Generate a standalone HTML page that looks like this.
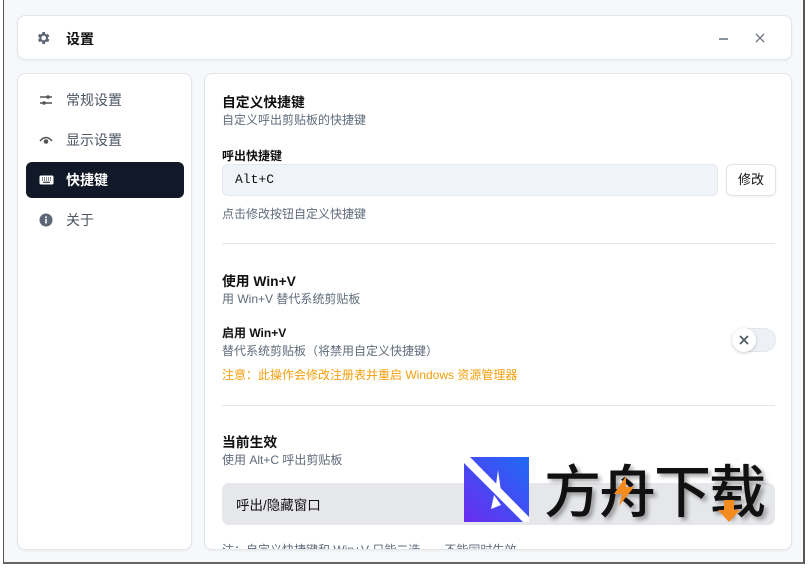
<!DOCTYPE html>
<html><head><meta charset="utf-8"><style>
*{box-sizing:border-box;margin:0;padding:0}
body{width:809px;height:568px;background:#fff;font-family:"Liberation Sans","Noto Sans CJK SC",sans-serif;position:relative;overflow:hidden;color:#111}
.win{position:absolute;left:3px;top:0;width:802px;height:564px;background:#f7f8fa;border-left:1px solid #555;border-right:2px solid #555;border-bottom:2px solid #666}
.card{position:absolute;background:#fff;border:1px solid #e1e5ec;border-radius:8px;box-shadow:0 1px 2px rgba(0,0,0,.05)}
.abs{position:absolute;white-space:nowrap}
.t{font-size:13.8px;font-weight:bold;color:#111}
.s{font-size:12px;color:#5f6b7a}
.nav{position:absolute;left:8px;width:158px;height:36px;border-radius:6px;font-size:14px;color:#4b5563;display:flex;align-items:center;padding-left:40px}
.nav svg{position:absolute;left:13px;top:11px}
.hr{position:absolute;left:17px;width:553px;height:1px;background:#e3e6eb}
</style></head><body>
<div class="win">
<div class="card" style="left:13px;top:15px;width:775px;height:45px">
 <svg class="abs" style="left:17px;top:14px" width="16" height="16" viewBox="0 0 24 24"><path fill="#5d6675" d="M19.4 13a7.5 7.5 0 0 0 0-2l2.1-1.6-2-3.5-2.5 1a7.4 7.4 0 0 0-1.7-1L15 3h-4l-.4 2.8a7.4 7.4 0 0 0-1.7 1l-2.5-1-2 3.5L6.6 11a7.5 7.5 0 0 0 0 2l-2.1 1.6 2 3.5 2.5-1a7.4 7.4 0 0 0 1.7 1L11 21h4l.4-2.8a7.4 7.4 0 0 0 1.7-1l2.5 1 2-3.5zM13 15.5a3.5 3.5 0 1 1 0-7 3.5 3.5 0 0 1 0 7z"/></svg>
 <div class="abs" style="left:48px;top:13px;font-size:14px;font-weight:bold">设置</div>
 <div class="abs" style="left:701px;top:22px;width:9px;height:1.5px;background:#8a93a0"></div>
 <svg class="abs" style="left:737px;top:17px" width="10" height="10" viewBox="0 0 10 10"><path d="M1 1L9 9M9 1L1 9" stroke="#6b7480" stroke-width="1.3"/></svg>
</div>
<div class="card" style="left:13px;top:73px;width:175px;height:477px">
 <div class="nav" style="top:8px"><svg width="14" height="14" viewBox="0 0 14 14"><path d="M1 4h12M1 10h12" stroke="#555" stroke-width="1.5"/><circle cx="9" cy="4" r="1.8" fill="#555"/><circle cx="5" cy="10" r="1.8" fill="#555"/></svg>常规设置</div>
 <div class="nav" style="top:48px"><svg width="14" height="14" viewBox="0 0 14 14"><path d="M1 8Q7 1 13 8" stroke="#555" stroke-width="1.4" fill="none"/><circle cx="7" cy="8.5" r="2.3" fill="#555"/></svg>显示设置</div>
 <div class="nav" style="top:88px;background:#111827;color:#fff;font-weight:bold"><svg width="15" height="14" viewBox="0 0 15 14"><rect x="0.5" y="2.5" width="14" height="9" rx="1.5" fill="#fff"/><path d="M3 5h1M5 5h1M7 5h1M9 5h1M11 5h1M3 7h1M5 7h1M7 7h1M9 7h1M11 7h1M4 9.3h7" stroke="#111827" stroke-width="1"/></svg>快捷键</div>
 <div class="nav" style="top:128px"><svg width="14" height="14" viewBox="0 0 14 14"><circle cx="7" cy="7" r="6.5" fill="#5d6675"/><rect x="6.2" y="6" width="1.6" height="4.5" fill="#fff"/><circle cx="7" cy="4.2" r="1" fill="#fff"/></svg>关于</div>
</div>
<div class="card" style="left:200px;top:73px;width:588px;height:477px;overflow:hidden">
 <div class="abs t" style="left:17px;top:17px">自定义快捷键</div>
 <div class="abs s" style="left:17px;top:37px">自定义呼出剪贴板的快捷键</div>
 <div class="abs" style="left:17px;top:73px;font-size:12px;font-weight:bold">呼出快捷键</div>
 <div class="abs" style="left:17px;top:90px;width:496px;height:32px;background:#f0f3f7;border:1px solid #e3e7ee;border-radius:6px;font-family:'Liberation Mono',monospace;font-size:13px;padding:7px 12px">Alt+C</div>
 <div class="abs" style="left:521px;top:90px;width:50px;height:32px;background:#fff;border:1px solid #dfe3ea;border-radius:6px;font-size:13px;text-align:center;line-height:30px;box-shadow:0 1px 2px rgba(0,0,0,.06)">修改</div>
 <div class="abs s" style="left:17px;top:131px">点击修改按钮自定义快捷键</div>
 <div class="hr" style="top:169px"></div>
 <div class="abs t" style="left:17px;top:196px">使用 Win+V</div>
 <div class="abs s" style="left:17px;top:216px">用 Win+V 替代系统剪贴板</div>
 <div class="abs" style="left:17px;top:250px;font-size:12px;font-weight:bold">启用 Win+V</div>
 <div class="abs s" style="left:17px;top:268px">替代系统剪贴板（将禁用自定义快捷键）</div>
 <div class="abs" style="left:17px;top:292px;font-size:12px;color:#f59e0b">注意：此操作会修改注册表并重启 Windows 资源管理器</div>
 <div class="abs" style="left:527px;top:254px;width:44px;height:24px;border-radius:12px;background:#eef1f6;border:1px solid #e2e6ed"></div>
 <div class="abs" style="left:527px;top:254px;width:24px;height:24px;border-radius:12px;background:#fff;box-shadow:0 1px 3px rgba(0,0,0,.2)"><svg style="position:absolute;left:7px;top:7px" width="10" height="10" viewBox="0 0 10 10"><path d="M1 1L9 9M9 1L1 9" stroke="#4b5563" stroke-width="1.6"/></svg></div>
 <div class="hr" style="top:331px"></div>
 <div class="abs t" style="left:17px;top:357px">当前生效</div>
 <div class="abs s" style="left:17px;top:377px">使用 Alt+C 呼出剪贴板</div>
 <div class="abs" style="left:17px;top:409px;width:553px;height:42px;background:#e6e7ea;border-radius:7px;font-size:13.5px;padding:11px 14px">呼出/隐藏窗口</div>
 <div class="abs s" style="left:17px;top:467px">注：自定义快捷键和 Win+V 只能二选一，不能同时生效</div>
</div>
</div>
<svg class="abs" style="left:464px;top:457px" width="65" height="65" viewBox="0 0 65 65"><defs><linearGradient id="g" x1="0" y1="1" x2="1" y2="0"><stop offset="0" stop-color="#6a2cf0"/><stop offset="1" stop-color="#1f6bf5"/></linearGradient></defs><rect width="65" height="65" fill="url(#g)"/><path d="M0 0h6l59 60v5h-6L0 6z" fill="#fff"/><path d="M34 13l-3 22 7 6z M30 38l-3 14 10-4z" fill="#fff"/></svg>
<div class="abs" style="left:544px;top:453px;font-size:57px;font-weight:500;font-family:'Noto Sans CJK SC',sans-serif;color:#111;letter-spacing:-2px;text-shadow:3px 3px 4px rgba(0,0,0,.35);line-height:70px">方舟下载</div>
<svg class="abs" style="left:612px;top:476px" width="24" height="30" viewBox="0 0 24 30"><path d="M14 0L2 18h8L7 30 22 11h-8z" fill="#f58a1f"/></svg>
<svg class="abs" style="left:717px;top:500px" width="24" height="22" viewBox="0 0 24 22"><path d="M7 0h10v10h6L12 22 1 10h6z" fill="#f58a1f"/></svg>
</body></html>
